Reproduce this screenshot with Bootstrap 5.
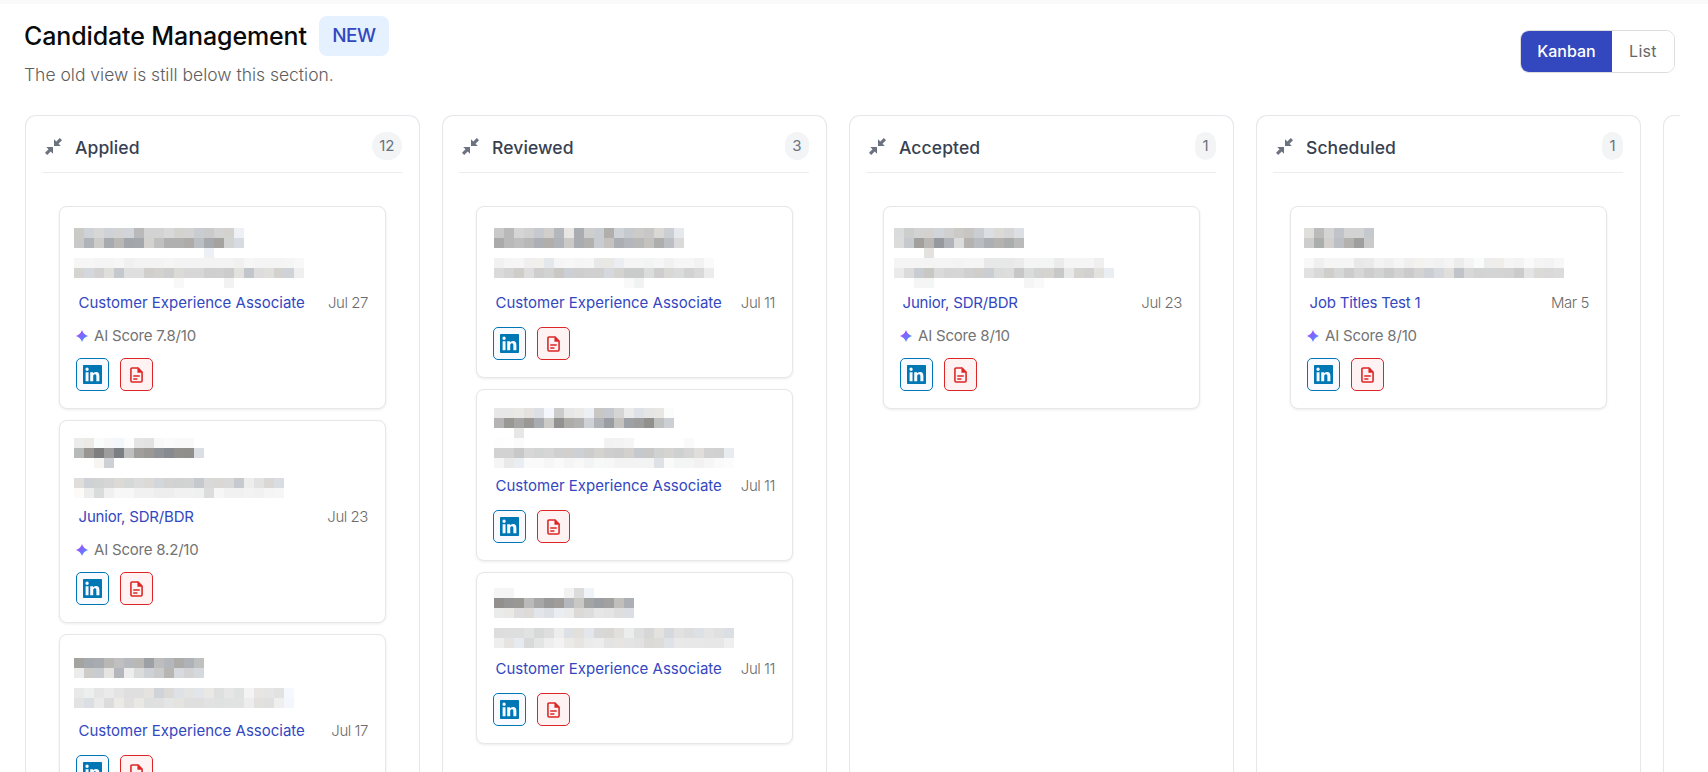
<!DOCTYPE html>
<html lang="en">
<head>
<meta charset="utf-8">
<meta name="viewport" content="width=device-width, initial-scale=1">
<title>Candidate Management</title>
<link href="https://cdn.jsdelivr.net/npm/bootstrap@5.3.0/dist/css/bootstrap.min.css" rel="stylesheet">
<style>
  body { font-family: Inter, "Open Sans", sans-serif; background: #fff; height: 772px; overflow: hidden; border-top: 4px solid #fafafa; }
  .page { padding: 12px 28px 0 25px; height: 768px; }
  .head { height: 99px; }
  .page-title { font-size: 25px; line-height: 41px; font-weight: 500; color: #0a0a0a; letter-spacing: -.13px; margin-left: -1px; }
  .new-tag { width: 70px; height: 40px; border-radius: 8px; background: #e5f1ff; color: #3347bf; font-size: 19px; font-weight: 500; line-height: 39px; letter-spacing: -.6px; margin-left: 12px; }
  .subtitle { font-size: 17.5px; line-height: 24px; font-weight: 300; color: #5e5e5e; margin: 6px 0 0 -1px; letter-spacing: -.01px; }
  .toggle { margin: 14px 5px 0 0; height: 43px; width: 155px; border: 1px solid #ddd; border-radius: 9px; overflow: hidden; }
  .toggle button { border: 0; border-radius: 0; padding: 0; font-size: 16px; line-height: 41px; color: #666; background: #fff; letter-spacing: .3px; }
  .toggle .on { width: 91px; background: #3347bf; color: #fff; font-weight: 500; letter-spacing: 0; }
  .board { gap: 22px; overflow: hidden; height: 657px; }
  .lane { flex: 0 0 385px; border: 1px solid #e5e7eb; border-bottom: 0; border-radius: 11px 11px 0 0; padding: 0 17px 0 16px; height: 700px; }
  .lane.wide { flex-basis: 395px; }
  .lane-head { height: 57px; border-bottom: 1px solid #ececef; padding: 4px 0 0 3px; }
  .lane-title { font-size: 17.5px; font-weight: 500; color: #374151; margin: 5px 0 0 13px; letter-spacing: .1px; }
  .count { height: 28px; line-height: 28px; border-radius: 14px; background: #f3f4f6; color: #6b7280; font-size: 15px; padding: 0 7.500px; }
  .cards { padding: 33px 16px 33px 17px; gap: 11px; }
  .person { border: 1px solid #e5e7eb; border-radius: 8px; padding: 16px 17px 17px 16px; box-shadow: 0 1px 3px rgba(0,0,0,.08); background: #fff; }
  .veil { display: block; overflow: visible; width: 100%; height: 68px; }
  .role { font-size: 15px; line-height: 24px; color: #3347bf; padding-left: 2.500px; }
  .role.brief { letter-spacing: -.18px; }
  .date { font-size: 15px; font-weight: 300; line-height: 24px; color: #6c6c6c; letter-spacing: -.45px; }
  .score { font-size: 15px; line-height: 19px; height: 19px; color: #737373; margin-top: 12px; gap: 6px; letter-spacing: -.2px; }
  .score span, .score svg { margin-top: -2px; }
  .links { margin-top: 12px; gap: 11px; }
  .chip { width: 33px; height: 33px; border: 1px solid #0077b5; border-radius: 5px; background: #f8faff; display: flex; align-items: center; justify-content: center; }
  .chip.cv { border-color: #dc2626; background: #fef2f2; }
  .chip svg { display: block; }
</style>
</head>
<body>
<svg width="0" height="0" class="position-absolute" aria-hidden="true">
  <defs>
    <linearGradient id="glow" x1="0" y1="0" x2="1" y2="1"><stop offset=".2" stop-color="#a04bff"/><stop offset=".8" stop-color="#4f8cff"/></linearGradient>
    <symbol id="shrink" viewBox="0 0 17 17"><path fill="#6b7280" d="M9 1.200V8h6.800l-2.300-2.300L17 2.200 14.800 0l-3.500 3.500zM8 15.800V9H1.200l2.300 2.300L0 14.800 2.200 17l3.500-3.500z"/></symbol>
    <symbol id="spark" viewBox="0 0 12 12"><path fill="url(#glow)" d="M6 0Q7.400 4.600 12 6 7.400 7.400 6 12 4.600 7.400 0 6 4.600 4.600 6 0z"/></symbol>
    <symbol id="linked" viewBox="0 0 24 24"><path fill="#0077b5" fill-rule="evenodd" d="M1 0h22A1 1 0 0 1 24 1v22a1 1 0 0 1-1 1H1A1 1 0 0 1 0 23V1A1 1 0 0 1 1 0zM3.300 9v11.450h3.700V9zM5.150 3.300a2.100 2.100 0 1 0 0 4.200 2.100 2.100 0 0 0 0-4.200zM9.100 9v11.450h3.800v-5.670c0-1.500.28-2.950 2.140-2.950 1.830 0 1.850 1.710 1.850 3.040v5.580h3.800v-6.280c0-3.080-.66-5.450-4.400-5.450-1.730 0-2.890.95-3.370 1.850h-.05V9z"/></symbol>
    <symbol id="doc" viewBox="0 0 14 17"><path fill="none" stroke="#dc2626" stroke-width="1.700" stroke-linejoin="round" d="M8.500 1H2.200Q1 1 1 2.200v12.600Q1 16 2.200 16h9.600q1.200 0 1.200-1.200V5.500"/><path fill="#dc2626" d="M8 .2h1L13.800 5v1.200H8z"/><path stroke="#dc2626" stroke-width="1.500" d="M3.500 9.500h7M3.500 12.800h4.500"/></symbol>
  </defs>
</svg>

<main class="page d-flex flex-column">
  <header class="head d-flex justify-content-between align-items-start flex-shrink-0">
    <div>
      <div class="d-flex align-items-start">
        <h1 class="page-title mb-0 text-nowrap">Candidate Management</h1>
        <span class="new-tag text-center">NEW</span>
      </div>
      <p class="subtitle">The old view is still below this section.</p>
    </div>
    <div class="toggle d-flex">
      <button class="btn on">Kanban</button>
      <button class="btn flex-fill">List</button>
    </div>
  </header>
  <div class="board d-flex" id="board"></div>
</main>

<script src="https://cdn.jsdelivr.net/npm/bootstrap@5.3.0/dist/js/bootstrap.bundle.min.js"></script>
<script>
// Hidden names are rows of 10px tiles: [top, first tile, "shade+tint ..."], tint w = warm, b = blue, g = green.
const CX = 'Customer Experience Associate', JR = 'Junior, SDR/BDR';
const lanes = [
 {name:'Applied', n:12, wide:true, cards:[
  {role:CX, date:'Jul 27', ai:'7.8', dx:-2, dy:5, v:[
   [0,0,'cbw d3b d7 d3b d3 d5b b9 d3 d3 d9 d3w d3 cdb ca d3 d3w f1b'],[10,0,'c9 b4b cdw abb b9w a6b a8b d3w c0 b0 b0 adw bfb aab a4w d3g dcb'],[20,13,'f1b'],
   [30,0,'f6 f6 f4 f4 f6 f0 f3 f3 f3 f5 f3 f3 f3 f3 f3 f3 f0 f6 f4 f4 f4 f5 f8'],[40,0,'d5w d8b d2 dfw c9b dfg df d0w d3w ce dbw d7 d7 cf d0 cc e2w c6b dde e0w d3w d3b ef'],[50,10,'f8'],[50,15,'f2']]},
  {role:JR, date:'Jul 23', ai:'8.2', dx:-2, dy:1, v:[
   [0,0,'ec ebw fbg f7 f7b fd e4 e2 f9 fb f9 f9'],[10,0,'b9g 97w 7e 9d 7fb bf a0w 9aw 93b 8bb 91w 90w dfb'],[20,2,'f6w d1b'],
   [40,0,'dfw d2b d3g d6 dbw d8g dc dbw d7b d3 d2g d3g c9b d9 d9w d9 cab ed e2 d9w ddb'],[50,0,'fcw ed dbg f0 f7 f7 f1 f1 ee ee f1 f1 f0g dc f6 f1 f1 f3 f1 f5 f6']]},
  {role:CX, date:'Jul 17', dx:-2, dy:7, v:[
   [0,0,'a4w a9b acb b9w c0 bab b9w a1b bd b8b adw b3b c0g'],[10,0,'ec cdw ccb e5w b7b ed dbg d2b ca b7w dab d3 d9b'],
   [30,0,'e9 eeg e5 ea e4 df df e4w d4b dbw e2b e4 e6b e9w dfg e6 e1g f4 e7w e5 e2 f9b'],[40,0,'e3 dfb ea dc ebw e0 e9w dfg e0 e5g e4w df df e2 e1g e2g e2g ed e2w e0 ef f7b']]}]},
 {name:'Reviewed', n:3, cards:[
  {role:CX, date:'Jul 11', dx:1, dy:5, v:[
   [0,0,'c9 b9 d5 d0 cab d0w b8b e7w adb ce cdb b0w d3b cab ccw c7 d9w cfb e9b'],[10,0,'aa b9 bf b8 b0b b0w b4b cbw adb b2w cdb c4w afb b7b b8 c3w aeg bfb da'],
   [30,0,'f1 f5 f6 ef f1w e8b f5 f7 f5 f6 e8 e9w eeb f5 f5 f3g f6 f1 f6 f6 f2 fa'],[40,0,'da d4 cew dd ce d2g c9w d0b ce d0 d0 d9b d4w cbg cbg dcg ce d9w dbg d2 d9 ec'],[50,13,'f9 f2g']]},
  {role:CX, date:'Jul 11', dx:1, dy:2, v:[
   [0,0,'e7 e7 eaw e3w e0b f8b cb e7 ebw f0b c8w c9b d5 eb e2b e5 e8w fcg'],[10,0,'b4 99w a6 9aw adb ccw 92 adw b2 d2b b4b 9eb c4w a2b 9d 91w c0g d0b'],[20,2,'e7'],[30,0,'fd fe fb'],[30,11,'f2 f3 f5'],[30,19,'fa'],
   [40,0,'d2 d2 c8 d7 d4g d6 d0 d1w d1b cd d4w ce cc d2w c9b c8 d1g d5w d0g d5 dfw d2 d1 ecb'],[50,0,'f5 e9 eeb fa fa f6 fa f5 f8 f4g f8g f7 f3 f3 f3 f3 e2b fa f5g f5g f2 f6 fa fc']]},
  {role:CX, date:'Jul 11', dx:1, dy:-1, v:[
   [0,0,'f5 f5'],[0,7,'f2 dc f4b'],[10,0,'91w 96 99w babb a7 999 9ew b8b c9w a4g 9fb a1 c0w b0b'],[20,0,'ebg eaw dd dcw e6b e1b eeb eb dbw dd e6 e4 de dfb'],
   [40,0,'dd de de e2g d8g de ed e1b e1w e7b d8 d8w e1w ecg de d7 e3w d9b e1 dd e1b e4 e0 dfb'],[50,0,'ee e5w ebb d9g e4g ee f3 ebw e6w eb ed e4 e6w e4 e2 dbw ddw e3b e9 e8 e8 e7 e7 ef']]}]},
 {name:'Accepted', n:1, cards:[
  {role:JR, date:'Jul 23', ai:'8', dx:-6, dy:5, v:[
   [0,0,'dbg cdg d3 d3w d5b d0 cbw c7w ceb dfb dbw d6 e0b'],[10,0,'dc cab a1w b8w 9ab b5b dc b4w bdb b0b b4w acg babb'],[20,3,'e3w'],
   [30,0,'f4 f4 f4 f4 f4 f4 f3g f5 f5 e8 e8g e8 eb f4 f4 f4g eb f5 f5 f5 ef'],[40,0,'ea db cdb c8w da d5 d6 d0 cfw ceb dbg dd c7 dbg d3 d5w c8 e8g d5w d1 e3w eeb'],[50,2,'f5 f5g'],[50,13,'f5 f9']]}]},
 {name:'Scheduled', n:1, cards:[
  {role:'Job Titles Test 1', date:'Mar 5', ai:'8', dx:-3, dy:5, v:[
   [0,0,'dfw bb d4 c4b d3 d3 c9b'],[10,0,'cd adg d2w c0b b3w 9f ca'],
   [30,0,'f8 ef f5 f5 f5 e8 ea f3 f0 f5 ef f3w f3 f1g f4 ec f4 fbg ed efw f5 f3 fa f4 f3 f7'],[40,0,'e1 d9 cfw d7g cc d6 cd d3 cag d3 cb d3 cfb d8b e0w c4b d8 d3 d4g d4 d3 cb e4 dbw d9 db']]}]},
 {name:'', cards:[]}
];
const tint = {w:[1,-1,-4], b:[-4,-1,3], g:[-2,1,-1]};
function tile(code, i, row, c) {
  const g = parseInt(code.slice(0,2),16), t = tint[code.slice(2)] || [0,0,0];
  const rgb = t.map(d => Math.min(255, g+d)).join();
  return `<rect x="${(row[1]+i)*10+c.dx}" y="${row[0]+c.dy}" width="10" height="10" fill="rgb(${rgb})"/>`;
}
const icon = (id,w,h) => `<svg width="${w}" height="${h}" class="flex-shrink-0"><use href="#${id}"/></svg>`;
const card = c => `<article class="person">
  <svg class="veil" shape-rendering="crispEdges">${c.v.map(r => r[2].split(' ').map((s,i) => tile(s,i,r,c)).join('')).join('')}</svg>
  <div class="d-flex justify-content-between text-nowrap"><span class="role${c.role === CX ? '' : ' brief'}">${c.role}</span><span class="date">${c.date}</span></div>
  ${c.ai ? `<div class="score d-flex align-items-center">${icon('spark',12,12)}<span>AI Score ${c.ai}/10</span></div>` : ''}
  <div class="links d-flex"><a class="chip">${icon('linked',19,19)}</a><a class="chip cv">${icon('doc',13,16)}</a></div>
</article>`;
document.getElementById('board').innerHTML = lanes.map(l => `<section class="lane${l.wide?' wide':''}">${l.name ? `
  <div class="lane-head d-flex align-items-center">${icon('shrink',17,17)}<span class="lane-title">${l.name}</span><span class="count ms-auto">${l.n}</span></div>
  <div class="cards d-flex flex-column">${l.cards.map(card).join('')}</div>` : ''}</section>`).join('');
</script>
</body>
</html>
